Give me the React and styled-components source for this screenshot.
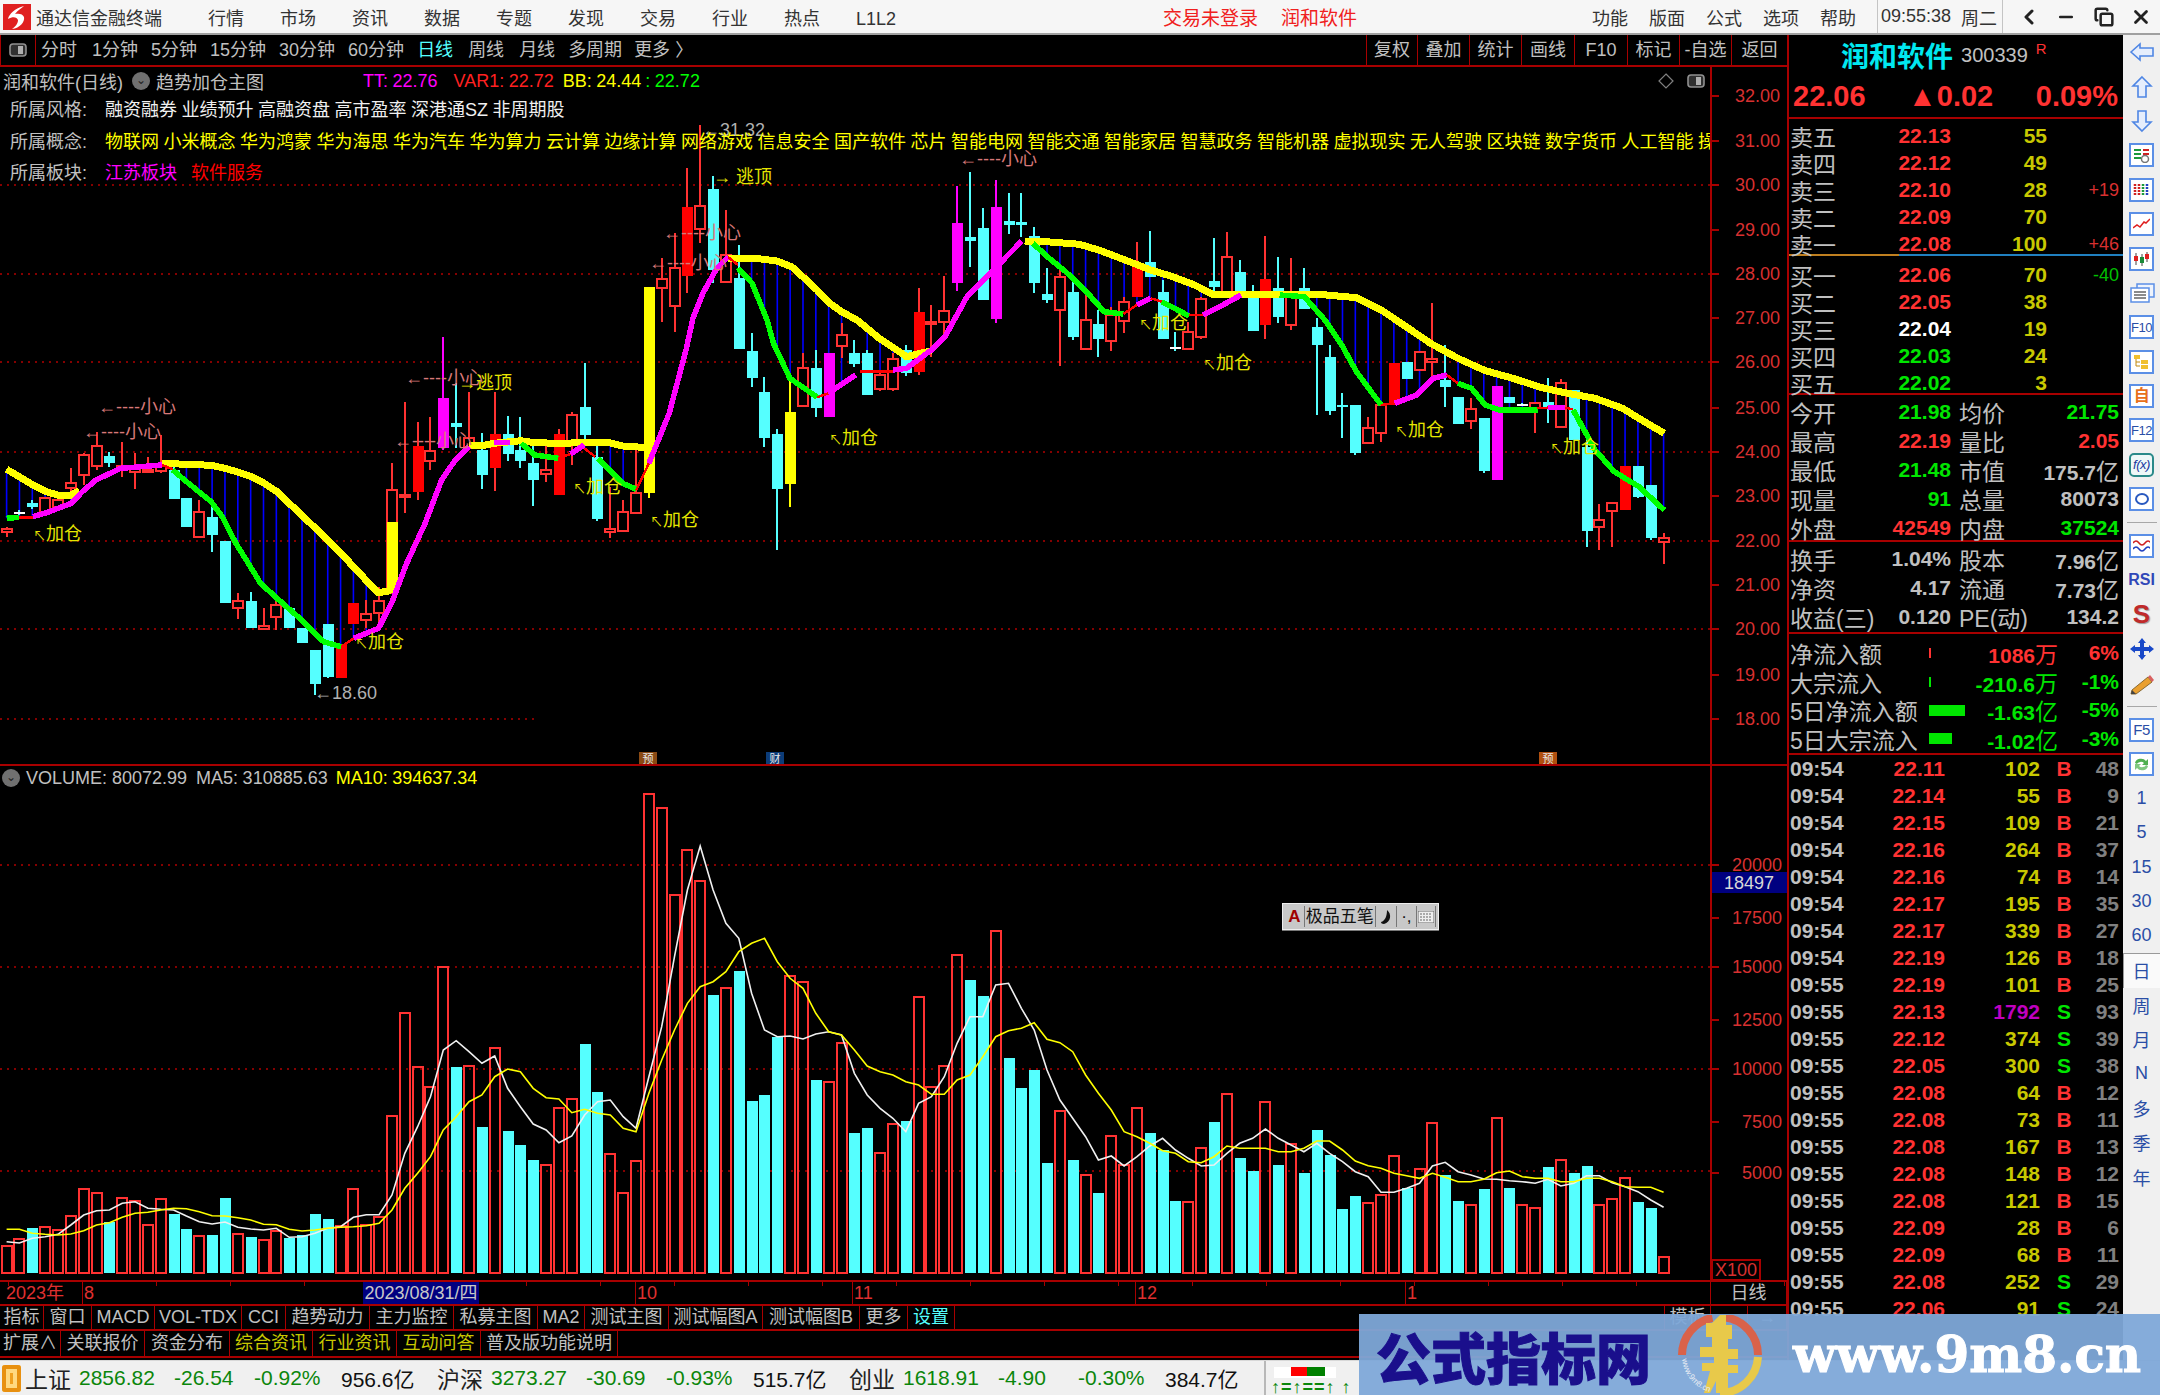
import React from "react";
import styled, { createGlobalStyle } from "styled-components";
import { ChevronLeft, Minus, Copy, X } from "lucide-react";

const RED = "#ff3232";
const GREEN = "#00e600";
const YEL = "#c8c800";
const GREY = "#c0c0c0";
const LINE = "#a80000";
const CYAN = "#55ffff";

const GlobalStyle = createGlobalStyle`
  html, body {
    margin: 0;
    background: #000;
    overflow: hidden;
  }
  body {
    font-family: "Liberation Sans", "Noto Sans CJK SC", sans-serif;
    color: ${GREY};
  }
`;

const Page = styled.div`
  position: relative;
  width: 2160px;
  height: 1395px;
  display: flex;
  flex-direction: column;
  overflow: hidden;
`;

/* ---------- title bar ---------- */

const TitleBar = styled.div`
  height: 33px;
  border-bottom: 2px solid #a0a0a0;
  background: #f6f6f6;
  color: #333;
  font-size: 18px;
  display: flex;
  align-items: center;
`;
const AppName = styled.span`
  width: 126px;
  margin: 0 46px 0 5px;
  white-space: nowrap;
`;
const MenuGroup = styled.div`
  display: flex;
  align-items: baseline;
  gap: ${p => p.$gap}px;
  margin-left: ${p => p.$left || "0"};
  color: ${p => p.$color || "inherit"};
  font-size: ${p => p.$size || 18}px;
`;
const Clock = styled.div`
  display: flex;
  gap: 10px;
  height: 33px;
  align-items: center;
  margin-left: 21px;
  padding: 0 5px 0 3px;
  border-left: 1px solid #c4c4c4;
  border-right: 1px solid #c4c4c4;
`;
const WindowBtn = styled.span`
  width: 37.5px;
  display: flex;
  justify-content: center;
  color: #222;
`;

/* ---------- layout ---------- */

const Body = styled.div`
  height: 1325px;
  display: flex;
`;
const LeftColumn = styled.div`
  width: 1787px;
  display: flex;
  flex-direction: column;
`;

const ChartToolbar = styled.div`
  height: 30px;
  border-bottom: 2px solid ${LINE};
  display: flex;
  font-size: 18px;
`;
const ToolBox = styled.div`
  width: 36px;
  border-right: 1px solid ${LINE};
  border-left: 1px solid ${LINE};
  box-sizing: border-box;
  display: flex;
  align-items: center;
  justify-content: center;
`;
const ToolItem = styled.span`
  margin-left: ${p => p.$left}px;
  color: ${p => p.$color || GREY};
  line-height: 30px;
  white-space: nowrap;
`;
const ToolGroup = styled.div`
  margin-left: auto;
  display: flex;
`;
const ToolCell = styled.span`
  width: ${p => p.$w}px;
  box-sizing: border-box;
  border-left: 1px solid ${LINE};
  text-align: center;
  line-height: 30px;
  white-space: nowrap;
`;

const Pane = styled.div`
  position: relative;
  height: ${p => p.$h}px;
  flex: none;
  border-bottom: ${p => p.$open ? "0" : `2px solid ${LINE}`};
`;
const ChartSvg = styled.svg`
  display: block;
  text { font-family: "Liberation Sans", "Noto Sans CJK SC", sans-serif; }
`;
const PaneHead = styled.div`
  position: absolute;
  left: 0;
  top: 0;
  width: 1710px;
  overflow: hidden;
  font-size: 18px;
  pointer-events: none;
`;
const IndicatorRow = styled.div`
  height: ${p => p.$h || 28}px;
  padding-left: ${p => p.$pad ?? 3}px;
  display: flex;
  align-items: center;
  white-space: nowrap;
`;
const Swatch = styled.span`
  color: ${p => p.$color};
  margin-left: ${p => p.$left || 0}px;
  white-space: nowrap;
  word-spacing: -0.5px;
`;
const ChevronDot = styled.span`
  width: 18px;
  height: 18px;
  margin: 0 6px 0 ${p => p.$left ?? 9}px;
  border-radius: 50%;
  background: #707070;
  color: #222;
  font-size: 12px;
  line-height: 17px;
  text-align: center;
`;
const InfoRow = styled.div`
  height: 31.5px;
  line-height: 31px;
  padding-left: 10px;
  white-space: nowrap;
  display: flex;
`;
const InfoLabel = styled.span`
  width: 95px;
  flex: none;
`;
const CornerIcons = styled.div`
  position: absolute;
  right: 82px;
  top: 6px;
  display: flex;
  gap: 13px;
  align-items: center;
`;

const AxisRow = styled.div`
  position: relative;
  height: 22px;
  flex: none;
  border-top: 2px solid ${LINE};
  border-bottom: 2px solid ${LINE};
  display: flex;
  color: #e03030;
  font-size: 18px;
  line-height: 22px;
  background: repeating-linear-gradient(90deg, ${LINE} 0 1px, transparent 1px 74px) 8px 0 / 100% 4px no-repeat;
`;
const AxisCell = styled.span`
  width: ${p => p.$w}px;
  box-sizing: border-box;
  padding-left: ${p => p.$pad ?? 6}px;
  border-right: 1px solid ${LINE};
  white-space: nowrap;
  color: ${p => p.$color || "inherit"};
  text-align: ${p => p.$align || "left"};
`;
const CursorDate = styled.span`
  position: absolute;
  left: 363px;
  top: 0;
  width: 116px;
  height: 22px;
  background: #000080;
  color: #c8c8c8;
  text-align: center;
  white-space: nowrap;
`;

const TabRow = styled.div`
  height: ${p => p.$h}px;
  flex: none;
  border-bottom: 2px solid ${LINE};
  display: flex;
  font-size: 18px;
  line-height: ${p => p.$h}px;
`;
const Tab = styled.span`
  width: ${p => p.$w}px;
  box-sizing: border-box;
  text-align: center;
  border-right: 1px solid ${LINE};
  white-space: nowrap;
  color: ${p => p.$color || GREY};
`;
const TabSpacer = styled.span`
  flex: 1;
  border-right: 1px solid ${LINE};
`;

/* ---------- quote panel ---------- */

const QuotePanel = styled.div`
  width: 336px;
  box-sizing: border-box;
  border-left: 2px solid ${LINE};
  font-size: 21px;
  font-weight: 700;
  overflow: hidden;
`;
const QuoteHead = styled.div`
  border-bottom: 2px solid ${LINE};
`;
const NameRow = styled.div`
  height: 40px;
  padding-left: 52px;
  display: flex;
  align-items: center;
  gap: 8px;
`;
const StockName = styled.span`
  color: #00e8f0;
  font-size: 28px;
`;
const StockCode = styled.span`
  color: ${GREY};
  font-size: 20px;
  font-weight: 400;
`;
const Rights = styled.sup`
  color: ${RED};
  font-size: 15px;
  font-weight: 400;
  margin-top: -14px;
`;
const PriceRow = styled.div`
  height: 42px;
  padding: 0 5px 0 4px;
  display: flex;
  align-items: center;
  justify-content: space-between;
  color: ${RED};
  font-size: 29px;
`;
const Section = styled.div`
  padding: ${p => p.$pad || "0"};
  border-bottom: ${p => p.$open ? "0" : `2px solid ${LINE}`};
`;
const SplitLine = styled.div`
  height: 2px;
  background: linear-gradient(90deg, #c08020 0 110px, #2080c0 110px);
`;
const Label = styled.span`
  color: ${GREY};
  font-size: 23px;
  font-weight: 400;
  white-space: nowrap;
`;
const Num = styled.span`
  color: ${p => p.$color || GREY};
  text-align: ${p => p.$align || "right"};
  white-space: nowrap;
`;
const Unit = styled.span`
  font-size: 23px;
  font-weight: 400;
`;
const BookRow = styled.div`
  height: 27px;
  padding-left: 1px;
  display: grid;
  grid-template-columns: 62px 99px 96px 72px;
  align-items: center;
`;
const Delta = styled(Num)`
  font-size: 18px;
  font-weight: 400;
`;
const StatRow = styled.div`
  height: 29px;
  padding-left: 1px;
  display: grid;
  grid-template-columns: 62px 99px 68px 100px;
  align-items: center;
`;
const StatLabel2 = styled(Label)`
  padding-left: 8px;
`;
const FlowRow = styled.div`
  height: 28.5px;
  padding-left: 1px;
  display: grid;
  grid-template-columns: 139px 40px 89px 61px;
  align-items: center;
`;
const FlowBar = styled.span`
  display: block;
  width: ${p => p.$w}px;
  height: ${p => p.$w > 4 ? 11 : 10}px;
  background: ${p => p.$color};
`;
const TickRow = styled.div`
  height: 27px;
  padding: 0 4px 0 1px;
  display: grid;
  grid-template-columns: 64px 91px 95px 48px 1fr;
  align-items: center;
`;
const Side = styled.span`
  color: ${p => p.$color};
  text-align: center;
`;

/* ---------- side toolbar ---------- */

const SideBar = styled.div`
  flex: 1;
  background: #f0f0f0;
  display: flex;
  flex-direction: column;
  align-items: center;
`;
const SideBtn = styled.div`
  width: 100%;
  height: 34.4px;
  flex: none;
  display: flex;
  align-items: center;
  justify-content: center;
  color: #2a4ea6;
  font-size: 18px;
  background: ${p => p.$on ? "#fafafa" : "transparent"};
  box-shadow: ${p => p.$on ? "inset 1px 1px 0 #9a9a9a" : "none"};
`;
const SideSep = styled.div`
  width: 30px;
  height: 12px;
  flex: none;
  background: linear-gradient(#a8a8a8, #a8a8a8) center / 100% 1px no-repeat;
`;
const IconFrame = styled.div`
  width: 21px;
  height: 20px;
  border: 2px solid #5b8fe6;
  background: #fff;
  display: flex;
  align-items: center;
  justify-content: center;
  color: #2a4ea6;
  font-size: 13px;
  letter-spacing: -0.5px;
  line-height: 1;
  white-space: nowrap;
`;

/* ---------- bottom status ---------- */

const StatusBar = styled.div`
  height: 34px;
  flex: none;
  border-top: 1px solid #d8d8d8;
  background: #f0f0f0;
  display: flex;
  align-items: center;
  padding-left: 2px;
`;
const Coin = styled.span`
  width: 19px;
  height: 27px;
  margin-right: 4px;
  border-radius: 3px;
  background: #f0a020;
  box-shadow: inset 0 0 0 4px #e89010, inset 0 0 0 8px #ffd880;
`;
const IndexBlock = styled.div`
  display: grid;
  grid-template-columns: 54px 95px 80px 87px 96px;
  align-items: center;
  font-size: 21px;
  color: #0b860b;
  white-space: nowrap;
`;
const IndexName = styled.span`
  font-size: 23px;
  color: #222;
`;
const IndexAmt = styled.span`
  color: #111;
`;
const MiniSep = styled.div`
  width: 100px;
  margin-left: 3px;
  height: 34px;
  border-left: 2px solid #b8b8b8;
`;

/* ---------- floating bits ---------- */

const ImeBar = styled.div`
  position: absolute;
  left: 1282px;
  top: 903px;
  height: 21px;
  width: 151px;
  padding: 2px;
  background: #c8c8c8;
  border: 1px solid #eee;
  box-shadow: 0 1px 0 #777;
  display: flex;
  color: #111;
  font-size: 17px;
  line-height: 21px;
`;
const ImeKey = styled.span`
  width: ${p => p.$w}px;
  display: flex;
  align-items: center;
  justify-content: center;
  white-space: nowrap;
  border-right: 1px solid #777;
  color: ${p => p.$color || "#111"};
  font-weight: ${p => p.$color ? 700 : 400};
`;

const Watermark = styled.div`
  position: absolute;
  left: 1359px;
  top: 1314px;
  right: 0;
  bottom: 0;
  background: rgba(126, 168, 216, 0.95);
  display: flex;
  align-items: center;
`;
const WmTitle = styled.span`
  margin-left: 17px;
  width: 275px;
  color: #1a0f8c;
  font-size: 55px;
  font-weight: 900;
  white-space: nowrap;
  -webkit-text-stroke: 1px #1a0f8c;
`;
const WmLogo = styled.svg`
  margin-left: 27px;
  flex: none;
`;
const WmUrl = styled.span`
  margin-left: 31px;
  color: #fff;
  font-family: "DejaVu Serif", serif;
  font-size: 50px;
  font-weight: 700;
  white-space: nowrap;
  -webkit-text-stroke: 1px #fff;
`;

/* ---------- chart data, y read off the 3x crops ---------- */

const barX = i => 6.6 + 12.845 * i;
const fromLeft = ([x, y]) => [x / 1.823, 300 + y / 3];
const fromRight = ([x, y]) => [860 + x / 1.823, 140 + y / 3];

// kind, high, top, bottom, low; base y 300
const LEFT_CANDLES = [
  ["r",680,686,696,710],["w",630,635,638,645],["c",600,608,622,628],["r",590,595,635,640],["r",585,600,622,630],
  ["r",505,550,564,572],["r",460,465,525,555],["r",395,438,498,510],["c",455,468,490,500],["r",425,497,508,530],
  ["r",458,500,515,568],["r",470,510,516,520],["r",405,495,512,520],["c",490,510,598,598],["c",595,595,680,680],
  ["r",600,636,710,715],["c",600,650,705,755],["c",722,722,910,910],["r",880,903,925,958],["c",875,902,985,985],
  ["r",925,978,988,988],["r",895,915,952,990],["c",925,925,985,985],["c",983,983,1030,1030],["c",1050,1050,1152,1185],
  ["c",973,973,1130,1135],["R",1035,1035,1135,1135],["R",910,910,972,972],["r",900,943,960,985],["r",860,902,938,965],
  ["ry",488,570,880,880,665],["r",305,586,590,640],["R",365,438,575,600],["r",350,452,484,510],["m",110,293,445,450],
  ["c",250,370,382,445],["r",275,415,440,450],["c",400,450,525,568],["R",275,402,503,572],["c",348,402,463,482],
  ["c",352,450,482,505],["c",430,488,540,617],["r",430,510,522,545],["R",388,402,585,585],["r",335,345,430,495],
  ["c",188,320,405,420],["c",430,470,658,662],["r",560,686,696,715],["r",600,637,692,692],["r",440,578,638,638],
  ["y",-39,-39,580,595],["r",-126,-63,-36,65],["r",-201,-96,18,95],["R",-396,-279,-72,-21],["r",-525,-282,-213,-171],
  ["c",-372,-333,-90,-51],["r",-270,-135,-54,-54],["c",-165,-66,148,148],["c",100,153,235,262],["c",230,276,415,440],
  ["c",388,402,567,750],["y",230,335,553,620],["r",160,205,318,318],["c",150,205,323,350],["m",158,158,350,350],
  ["r",70,105,138,175],["c",120,158,192,200],
];
// same, base y 140
const RIGHT_CANDLES = [
  ["c",630,638,765,765],["r",690,706,748,752],["r",640,658,748,752],["c",615,630,700,708],["R",445,517,695,705],
  ["r",495,545,550,650],["r",408,513,545,600],["m",138,250,430,452],["c",95,292,303,380],["c",203,265,480,480],
  ["m",120,202,537,550],["c",160,242,254,282],["c",160,247,254,290],["c",260,287,430,458],["c",385,463,480,490],
  ["r",375,410,510,678],["c",415,455,592,600],["r",445,540,627,630],["c",510,553,596,650],["r",500,525,604,632],
  ["r",470,487,542,578],["R",305,380,470,470],["c",273,365,412,412],["c",420,455,597,597],["w",575,620,623,632],
  ["r",545,577,627,627],["r",470,477,590,597],["c",295,423,440,470],["r",275,352,455,455],["c",360,395,460,460],
  ["c",436,475,574,574],["R",287,418,555,597],["c",350,445,530,548],["r",355,465,555,570],["c",385,445,507,507],
  ["c",535,562,615,825],["c",615,652,812,825],["c",760,795,800,893],["c",796,796,940,945],["r",832,865,910,910],
  ["r",795,795,878,907],["R",670,670,795,795],["c",665,665,718,718],["r",635,635,690,690],["r",490,657,667,720],
  ["c",615,720,740,800],["c",770,770,853,853],["r",773,806,842,867],["c",833,833,994,998],["m",738,738,1020,1020],
  ["c",770,770,790,790],["w",790,792,795,798],["r",788,788,805,880],["c",715,786,802,850],["r",718,730,862,862],
  ["c",750,750,900,900],["c",900,920,1172,1222],["r",1092,1140,1162,1230],["r",1090,1090,1113,1222],["R",977,977,1110,1110],
  ["c",977,977,1070,1075],["c",1035,1035,1195,1200],["r",1180,1193,1207,1272],
];

const toPage = (list, base) => list.map(c => {
  const [kind, ...rest] = c;
  return [kind, ...rest.map(v => base + v / 3)];
});
const CANDLES = [...toPage(LEFT_CANDLES, 300), ...toPage(RIGHT_CANDLES, 140)];

const left = pts => pts.map(fromLeft);
const right = pts => pts.map(fromRight);

const YELLOW_SEGS = [
  left([[12,508],[35,530],[60,555],[85,575],[105,585],[129,585],[145,572]]),
  left([[295,490],[340,493],[385,496],[410,505],[435,517],[458,530],[480,548],[505,575],[527,610],[550,645],[572,680],[597,720],[622,760],[644,800],[667,840],[690,878],[712,872]]),
  left([[855,437],[880,437],[900,430],[950,422],[975,428],[1018,430],[1065,428],[1110,428],[1135,438],[1183,443]]),
  [[728,258],[753,258],[777,261],[792,267],[803,277],[817,290],[828,302],[842,312],[857,320],...right([[35,595],[85,650],[130,632]])],
  right([[300,303],[340,305],[400,313],[435,330],[480,358],[530,390],[570,410],[610,435],[645,465],[700,462],[830,462],[905,473],[950,510],[1000,565],[1040,610],[1090,655],[1140,692],[1190,715],[1240,742],[1290,760],[1340,775],[1390,805],[1430,845],[1466,880]]),
];

const LOWER_SEGS = [
  ["g", left([[12,655],[35,652]])],
  ["r", left([[35,652],[60,652]])],
  ["m", left([[60,650],[85,638],[130,610],[150,575],[175,540],[220,505],[295,495]])],
  ["r", left([[295,495],[315,508]])],
  ["g", left([[315,510],[340,545],[385,605],[405,650],[430,730],[475,850],[505,895],[550,960],[590,1025],[622,1040]])],
  ["r", left([[622,1040],[645,1015]])],
  ["m", left([[645,1015],[690,985],[715,905],[740,795],[775,670],[805,540],[830,480],[855,440]])],
  ["m", left([[900,428],[930,428]])],
  ["g", left([[950,430],[975,465],[1018,475]])],
  ["r", left([[1018,475],[1040,462]])],
  ["m", left([[1040,462],[1065,435]])],
  ["r", left([[1065,445],[1085,470]])],
  ["g", left([[1090,475],[1135,550],[1160,568]])],
  ["r", left([[1160,570],[1183,490]])],
  ["m", [...left([[1183,490],[1220,340]]),[686,350],[693,318],[703,293],[717,268],[728,257]]],
  ["r", [[728,257],[738,265]]],
  ["g", [[738,268],[752,283],[767,320],...left([[1410,130],[1440,235],[1490,292]])]],
  ["r", left([[1490,292],[1510,280]])],
  ["m", left([[1510,280],[1560,225]])],
  ["r", right([[0,695],[60,695]])],
  ["m", right([[60,690],[85,685],[130,630],[155,590],[195,470],[240,395],[295,303]])],
  ["g", right([[315,310],[345,355],[375,395],[410,450],[445,515],[480,522]])],
  ["r", right([[480,522],[505,495]])],
  ["m", right([[505,495],[530,475]])],
  ["r", right([[530,475],[550,485]])],
  ["g", right([[550,485],[600,528]])],
  ["r", right([[600,525],[625,525]])],
  ["m", right([[625,525],[650,505],[695,465]])],
  ["g", right([[765,465],[810,470],[850,545],[880,620],[905,695],[950,795]])],
  ["r", right([[950,795],[975,790]])],
  ["m", right([[975,790],[1015,765],[1045,715],[1070,705]])],
  ["r", right([[1070,705],[1090,730]])],
  ["g", right([[1090,730],[1115,745],[1140,795],[1165,810],[1235,810]])],
  ["r", right([[1235,805],[1255,803]])],
  ["m", right([[1255,803],[1285,803]])],
  ["r", right([[1285,803],[1300,808]])],
  ["g", right([[1300,810],[1340,930],[1375,995],[1420,1040],[1466,1110]])],
];

const BLUE_RANGES = [[0,5],[13,29],[39,49],[57,65],[67,70],[81,93],[102,129]];

const interp = (pts, x) => {
  for (let k = 1; k < pts.length; k++) {
    const [x0, y0] = pts[k - 1];
    const [x1, y1] = pts[k];
    if (x >= x0 && x <= x1 && x1 > x0) return y0 + (y1 - y0) * (x - x0) / (x1 - x0);
  }
  return null;
};
const yellowAll = YELLOW_SEGS.flat();
const lowerAll = LOWER_SEGS.flatMap(s => s[1]);
const BLUE_LINES = BLUE_RANGES.flatMap(([a, b]) => {
  const out = [];
  for (let i = a; i <= b; i++) {
    const x = barX(i);
    const y0 = interp(yellowAll, x);
    const y1 = interp(lowerAll, x);
    if (y0 != null && y1 != null) out.push([x, y0, y1]);
  }
  return out;
});

const LABELS = [
  { x: 98, y: 407, t: "←----小心", c: "warn" },
  { x: 83, y: 432, t: "←----小心", c: "warn" },
  { x: 394, y: 441, t: "←----小心", c: "warn" },
  { x: 405, y: 378, t: "←----小心", c: "warn" },
  { x: 663, y: 233, t: "←----小心", c: "warn" },
  { x: 649, y: 263, t: "←----小心", c: "warn" },
  { x: 959, y: 159, t: "←----小心", c: "warn" },
  { x: 458, y: 383, t: "→逃顶", c: "add" },
  { x: 713, y: 177, t: "→ 逃顶", c: "add" },
  { x: 33, y: 534, t: "↖加仓", c: "add" },
  { x: 355, y: 642, t: "↖加仓", c: "add" },
  { x: 573, y: 487, t: "↖加仓", c: "add" },
  { x: 650, y: 520, t: "↖加仓", c: "add" },
  { x: 829, y: 438, t: "↖加仓", c: "add" },
  { x: 1139, y: 323, t: "↖加仓", c: "add" },
  { x: 1203, y: 363, t: "↖加仓", c: "add" },
  { x: 1395, y: 430, t: "↖加仓", c: "add" },
  { x: 1550, y: 447, t: "↖加仓", c: "add" },
  { x: 314, y: 693, t: "←18.60", c: "plain" },
  { x: 702, y: 130, t: "←31.32", c: "plain" },
];
const LABEL_COLOR = { warn: "#d87878", add: "#e6e600", plain: "#b0b0b0" };

const PRICE_TICKS = [[32,96],[31,141],[30,185],[29,230],[28,274],[27,318],[26,362],[25,408],[24,452],[23,496],[22,541],[21,585],[20,629],[19,675],[18,719]];
const PRICE_GRID = [[185,1711],[274,1711],[362,1711],[452,1711],[541,1711],[629,1711],[719,537]];
const EVENT_MARKS = [[639,"#8a4a14","预"],[766,"#0c3c78","财"],[1539,"#b05010","预"]];

// cyan bars are stored negative, y base 760
const VOLUMES = [
  1458,1436,-1403,1400,1409,1368,1287,1300,-1386,1314,1322,1395,1318,-1362,-1408,1427,-1425,-1313,1422,-1430,
  1440,1413,-1433,-1425,-1362,-1376,1398,1287,1395,1372,1067,760,922,980,620,-920,917,-1100,863,-1114,
  -1155,-1200,1214,1043,1016,-853,-997,1183,1300,1202,102,143,404,269,364,-704,683,-632,-1024,-1006,
  -830,647,665,-961,967,850,-1119,-1105,1178,1093,-1083,710,980,917,584,-659,-709,513,-894,-983,
  -930,-1209,1052,-1200,1246,-1299,1129,1215,1043,-1119,-1170,-1322,1327,1165,-1087,1003,-1195,-1232,1025,-1214,
  1152,-1240,-1109,-1186,-1348,-1307,1328,1305,1187,-1283,1228,1088,-1244,-1322,1336,-1286,1075,-1285,1336,1345,
  -1222,1201,-1240,-1217,1336,1318,1255,-1326,-1344,1490,
];
const MA5 = [
  1445,1449,1435,1430,1423,1395,1365,1352,1350,1330,1325,1345,1348,1350,1368,1385,1392,1386,1402,1407,
  1410,1405,1432,1430,1420,1405,1400,1372,1364,1364,1305,1180,1100,1010,870,842,875,910,888,985,
  1040,1092,1110,1148,1128,1065,1025,1020,1070,1105,950,800,590,390,258,390,490,535,700,810,
  830,828,837,822,815,825,940,1005,1045,1075,1115,1030,1010,950,850,770,770,675,670,745,
  810,930,1020,1075,1130,1200,1188,1218,1190,1158,1135,1170,1195,1218,1215,1180,1150,1135,1107,1135,
  1155,1175,1150,1180,1205,1235,1250,1297,1297,1285,1270,1218,1207,1235,1245,1257,1258,1262,1265,1270,
  1258,1278,1270,1247,1247,1268,1280,1295,1320,1342,
];
const MA10 = [
  1408,1408,1420,1423,1425,1422,1412,1395,1388,1372,1360,1357,1350,1345,1346,1355,1367,1368,1373,1380,
  1393,1394,1408,1413,1410,1405,1402,1400,1397,1390,1350,1285,1240,1190,1110,1070,1025,1005,950,927,
  935,985,1013,1017,1058,1048,1060,1065,1105,1115,1000,900,810,730,680,665,635,575,550,535,
  605,655,685,760,815,825,870,918,935,945,965,975,1003,1003,960,945,890,830,812,805,
  788,838,848,875,945,1000,1050,1115,1130,1150,1172,1180,1205,1208,1190,1158,1165,1165,1165,1175,
  1175,1165,1143,1143,1170,1203,1217,1225,1240,1247,1255,1240,1252,1265,1265,1258,1238,1233,1250,1255,
  1255,1265,1265,1255,1255,1265,1280,1282,1282,1297,
];
const VOL_TICKS = [["20000",865],["17500",918],["15000",967],["12500",1020],["10000",1069],["7500",1122],["5000",1173]];
const VOL_GRID = [865, 967, 1069, 1171];

const volY = z => 760 + z / 3;
const polyPoints = pts => pts.map(p => p.map(v => v.toFixed(1)).join(",")).join(" ");
const maPoints = list => list.map((z, i) => `${barX(i).toFixed(1)},${volY(z).toFixed(1)}`).join(" ");

/* ---------- chart parts ---------- */

const LOWER_COLOR = { g: "#00ff00", m: "#ff00ff", r: "#ff0000" };

const Candle = ({ i, data }) => {
  const [kind, high, top, bottom, low, split] = data;
  const cx = Math.round(barX(i));
  const hollow = kind === "r" || kind === "ry";
  const fill = { c: CYAN, R: "#ff0000", y: "#ffff00", m: "#ff00ff", w: "#ffffff" }[kind];
  const wick = hollow || kind === "R" ? RED : kind === "c" || kind === "w" ? CYAN : fill;
  return (
    <g shapeRendering="crispEdges">
      <rect x={cx - 1} y={high} width={2} height={Math.max(low - high, 1)} fill={wick} />
      {hollow ? (
        <rect x={cx - 5} y={top} width={10} height={Math.max(bottom - top, 2)} fill="#000" stroke={RED} strokeWidth={2} />
      ) : (
        <rect x={cx - 5.5} y={top} width={11} height={Math.max(bottom - top, 2)} fill={fill} />
      )}
      {kind === "ry" && <rect x={cx - 5.5} y={split} width={11} height={bottom - split} fill="#ffff00" />}
    </g>
  );
};

// small arrow in front of 加仓, the reference draws it narrower than a CJK cell
const ChartLabel = ({ l }) => {
  const small = l.t[0] === "↖";
  return (
    <text x={l.x} y={l.y + 6} fontSize={18} fill={LABEL_COLOR[l.c]}>
      {small ? <><tspan fontSize={13}>↖</tspan>{l.t.slice(1)}</> : l.t}
    </text>
  );
};

const PriceChart = () => (
  <ChartSvg width={1787} height={697} viewBox="0 67 1787 697">
    {PRICE_GRID.map(([y, end]) => (
      <line key={y} x1={0} x2={end} y1={y} y2={y} stroke="#b00000" strokeWidth={1.5} strokeDasharray="2 5" />
    ))}
    {EVENT_MARKS.map(([x, bg, t]) => (
      <g key={x}>
        <rect x={x} y={752} width={18} height={12} fill={bg} />
        <text x={x + 9} y={763} fontSize={11} fill="#e8e8e8" textAnchor="middle">{t}</text>
      </g>
    ))}
    {BLUE_LINES.map(([x, y0, y1]) => (
      <line key={x} x1={x} x2={x} y1={y0} y2={y1} stroke="#0000ff" strokeWidth={1.6} />
    ))}
    {CANDLES.map((c, i) => <Candle key={i} i={i} data={c} />)}
    {YELLOW_SEGS.map((pts, k) => (
      <polyline key={k} points={polyPoints(pts)} fill="none" stroke="#ffff00" strokeWidth={7} shapeRendering="crispEdges" />
    ))}
    {LOWER_SEGS.map(([c, pts], k) => (
      <polyline key={k} points={polyPoints(pts)} fill="none" stroke={LOWER_COLOR[c]} strokeWidth={c === "r" ? 2.5 : 5.5} shapeRendering="crispEdges" />
    ))}
    {LABELS.map(l => <ChartLabel key={`${l.x}-${l.y}`} l={l} />)}
    <line x1={1711} x2={1711} y1={67} y2={764} stroke={LINE} strokeWidth={2} />
    {PRICE_TICKS.map(([v, y]) => (
      <g key={v}>
        <line x1={1711} x2={1719} y1={y} y2={y} stroke={LINE} strokeWidth={2} />
        <text x={1780} y={y + 6} fontSize={18} fill="#d83030" textAnchor="end">{v.toFixed(2)}</text>
      </g>
    ))}
  </ChartSvg>
);

const VolumeChart = () => (
  <ChartSvg width={1787} height={514} viewBox="0 766 1787 514">
    {VOL_GRID.map(y => (
      <line key={y} x1={0} x2={1711} y1={y} y2={y} stroke="#b00000" strokeWidth={1.5} strokeDasharray="2 5" />
    ))}
    <g shapeRendering="crispEdges">
      {VOLUMES.map((v, i) => {
        const cx = Math.round(barX(i));
        const top = volY(Math.abs(v));
        return v < 0 ? (
          <rect key={i} x={cx - 5.5} y={top} width={11} height={1273 - top} fill={CYAN} />
        ) : (
          <rect key={i} x={cx - 5} y={top} width={10} height={1273 - top} fill="none" stroke={RED} strokeWidth={2} />
        );
      })}
    </g>
    <polyline points={maPoints(MA5)} fill="none" stroke="#f0f0f0" strokeWidth={1.6} />
    <polyline points={maPoints(MA10)} fill="none" stroke="#ffff00" strokeWidth={1.6} />
    <line x1={1711} x2={1711} y1={766} y2={1280} stroke={LINE} strokeWidth={2} />
    {VOL_TICKS.map(([t, y]) => (
      <g key={t}>
        <line x1={1711} x2={1719} y1={y} y2={y} stroke={LINE} strokeWidth={2} />
        <text x={1782} y={y + 6} fontSize={18} fill="#d83030" textAnchor="end">{t}</text>
      </g>
    ))}
    <rect x={1712} y={872} width={75} height={21} fill="#000080" />
    <text x={1749} y={889} fontSize={18} fill="#d8d8d8" textAnchor="middle">18497</text>
    <rect x={1712} y={1260} width={48} height={20} fill="none" stroke={LINE} strokeWidth={2} />
    <text x={1736} y={1276} fontSize={18} fill="#d83030" textAnchor="middle">X100</text>
  </ChartSvg>
);

/* ---------- icons ---------- */

const Glyph = ({ children, w = 26, h = 24 }) => (
  <svg width={w} height={h} viewBox="0 0 26 24">{children}</svg>
);
const ArrowPath = ({ d }) => <path d={d} fill="#e6eefc" stroke="#4f86e4" strokeWidth={1.6} />;

const SIDE_ICONS = {
  left: <Glyph><ArrowPath d="M2 12 L11 4 V8 H24 V16 H11 V20 Z" /></Glyph>,
  up: <Glyph><ArrowPath d="M13 2 L22 11 H17 V22 H9 V11 H4 Z" /></Glyph>,
  down: <Glyph><ArrowPath d="M13 22 L22 13 H17 V2 H9 V13 H4 Z" /></Glyph>,
  quote: <IconFrame><svg width="17" height="16"><path d="M1 3h7M1 7h7M1 11h7" stroke="#1a9a3a" strokeWidth="2" /><path d="M10 3h6M10 7h6" stroke="#d02020" strokeWidth="2" /><circle cx="12" cy="12" r="3.5" fill="none" stroke="#777" strokeWidth="1.5" /></svg></IconFrame>,
  grid: <IconFrame><svg width="17" height="16"><path d="M2 2v12M6 2v12" stroke="#d02020" strokeWidth="2.5" strokeDasharray="2 1" /><path d="M10 2v12" stroke="#1a9a3a" strokeWidth="2.5" strokeDasharray="2 1" /><path d="M14 2v12" stroke="#2040c0" strokeWidth="2.5" strokeDasharray="2 1" /></svg></IconFrame>,
  line: <IconFrame><svg width="17" height="16"><path d="M0 12 L4 9 L7 11 L11 6 L13 7 L17 3" fill="none" stroke="#e02020" strokeWidth="1.5" /></svg></IconFrame>,
  candle: <IconFrame><svg width="17" height="16"><path d="M3 2v12M9 3v12M14 1v10" stroke="#444" /><rect x="1" y="5" width="4" height="5" fill="#e02020" /><rect x="7" y="6" width="4" height="6" fill="#1a8a3a" /><rect x="12" y="3" width="4" height="5" fill="#e02020" /></svg></IconFrame>,
  windows: <Glyph><rect x="8" y="3" width="17" height="13" fill="#eef3fc" stroke="#5b8fe6" strokeWidth="1.5" /><rect x="2" y="7" width="18" height="14" fill="#fff" stroke="#5b8fe6" strokeWidth="1.5" /><path d="M5 11h12M5 14h12M5 17h12" stroke="#666" strokeWidth="1.5" /></Glyph>,
  f10: <IconFrame>F10</IconFrame>,
  tree: <IconFrame><svg width="17" height="16"><path d="M3 4v8h4M3 8h4" fill="none" stroke="#c08a10" /><rect x="1" y="1" width="6" height="4" fill="#f0c030" /><rect x="8" y="6" width="7" height="4" fill="#f0c030" /><rect x="8" y="11" width="7" height="4" fill="#f0c030" /></svg></IconFrame>,
  self: <IconFrame style={{ color: "#e8701a", fontWeight: 700, fontSize: 16 }}>自</IconFrame>,
  f12: <IconFrame>F12</IconFrame>,
  fx: <IconFrame style={{ borderColor: "#2a8a8a", borderRadius: 5, fontStyle: "italic", color: "#1a3aa0", background: "#eef8f8" }}>f(x)</IconFrame>,
  ring: <IconFrame><svg width="16" height="14"><ellipse cx="8" cy="7" rx="6" ry="5" fill="none" stroke="#2a5ac0" strokeWidth="2" /></svg></IconFrame>,
  wave: <IconFrame><svg width="17" height="16"><path d="M0 5 Q3 1 6 5 T12 5 T18 5" fill="none" stroke="#d02020" strokeWidth="1.5" /><path d="M0 11 Q3 7 6 11 T12 11 T18 11" fill="none" stroke="#2040c0" strokeWidth="1.5" /></svg></IconFrame>,
  rsi: <span style={{ fontWeight: 900, fontSize: 16, color: "#3048b8" }}>RSI</span>,
  dollar: <span style={{ fontWeight: 900, fontSize: 26, color: "#c02a2a", textShadow: "1px 1px 1px #999" }}>S</span>,
  move: <Glyph><path d="M13 1 L17 6 H15 V10 H20 V8 L25 12 L20 16 V14 H15 V18 H17 L13 23 L9 18 H11 V14 H6 V16 L1 12 L6 8 V10 H11 V6 H9 Z" fill="#1848c8" /></Glyph>,
  pencil: <Glyph><path d="M3 19 L19 6 L23 11 L7 23 L2 23 Z" fill="#eaa030" stroke="#8a6a30" /><path d="M19 6 L21 4 L25 9 L23 11 Z" fill="#d86060" /><path d="M2 23 L3 19 L7 23 Z" fill="#444" /></Glyph>,
  f5: <IconFrame style={{ fontSize: 15 }}>F5</IconFrame>,
  refresh: <IconFrame><svg width="17" height="16"><path d="M2 7 A6 5 0 0 1 13 5 L15 3 V9 H9 L11 7 A4 3 0 0 0 4 8 Z" fill="#50b050" /><path d="M15 10 A6 5 0 0 1 4 12 L2 14 V8 H8 L6 10 A4 3 0 0 0 13 9 Z" fill="#80c880" /></svg></IconFrame>,
};

const SIDE_ITEMS = [
  "left", "up", "down", "quote", "grid", "line", "candle", "windows", "f10", "tree", "self", "f12", "fx", "ring",
  "-", "wave", "rsi", "dollar", "move", "pencil",
  "-", "f5", "refresh",
];
const SIDE_PERIODS = ["1", "5", "15", "30", "60", "日", "周", "月", "N", "多", "季", "年"];

const ToolIcon = () => (
  <svg width="18" height="14" viewBox="0 0 18 14">
    <rect x="1" y="1" width="16" height="12" rx="3" fill="#303030" stroke="#909090" strokeWidth="1.6" />
    <rect x="9" y="3" width="5" height="8" fill="#b0b0b0" />
  </svg>
);

const AppLogo = () => (
  <svg width="28" height="26" viewBox="0 0 28 26" style={{ marginLeft: 3 }}>
    <rect width="28" height="26" fill="#e02020" />
    <path d="M21 2 C12 4 6 10 5 15 C10 12 14 13 15 16 C15 20 12 23 9 25 C17 24 22 18 21 13 C20 10 16 9 12 10 C15 6 19 4 21 2 Z" fill="#fff" />
  </svg>
);

/* ---------- panel data ---------- */

const SELLS = [
  ["卖五", "22.13", "55", ""],
  ["卖四", "22.12", "49", ""],
  ["卖三", "22.10", "28", "+19"],
  ["卖二", "22.09", "70", ""],
  ["卖一", "22.08", "100", "+46"],
];
const BUYS = [
  ["买一", "22.06", RED, "70", "-40"],
  ["买二", "22.05", RED, "38", ""],
  ["买三", "22.04", "#ffffff", "19", ""],
  ["买四", "22.03", GREEN, "24", ""],
  ["买五", "22.02", GREEN, "3", ""],
];
const STATS_A = [
  ["今开", "21.98", GREEN, "均价", "21.75", GREEN],
  ["最高", "22.19", RED, "量比", "2.05", RED],
  ["最低", "21.48", GREEN, "市值", "175.7亿", GREY],
  ["现量", "91", GREEN, "总量", "80073", GREY],
  ["外盘", "42549", RED, "内盘", "37524", GREEN],
];
const STATS_B = [
  ["换手", "1.04%", GREY, "股本", "7.96亿", GREY],
  ["净资", "4.17", GREY, "流通", "7.73亿", GREY],
  ["收益(三)", "0.120", GREY, "PE(动)", "134.2", GREY],
];
const FLOWS = [
  ["净流入额", 2, RED, "1086万", "6%"],
  ["大宗流入", 2, GREEN, "-210.6万", "-1%"],
  ["5日净流入额", 36, GREEN, "-1.63亿", "-5%"],
  ["5日大宗流入", 23, GREEN, "-1.02亿", "-3%"],
];
const TICKS = [
  ["09:54","22.11","102","B","48"],["09:54","22.14","55","B","9"],["09:54","22.15","109","B","21"],
  ["09:54","22.16","264","B","37"],["09:54","22.16","74","B","14"],["09:54","22.17","195","B","35"],
  ["09:54","22.17","339","B","27"],["09:54","22.19","126","B","18"],["09:55","22.19","101","B","25"],
  ["09:55","22.13","1792","S","93"],["09:55","22.12","374","S","39"],["09:55","22.05","300","S","38"],
  ["09:55","22.08","64","B","12"],["09:55","22.08","73","B","11"],["09:55","22.08","167","B","13"],
  ["09:55","22.08","148","B","12"],["09:55","22.08","121","B","15"],["09:55","22.09","28","B","6"],
  ["09:55","22.09","68","B","11"],["09:55","22.08","252","S","29"],["09:55","22.06","91","S","24"],
];

const withUnit = s => {
  const last = s[s.length - 1];
  if (last === "亿" || last === "万") return <>{s.slice(0, -1)}<Unit>{last}</Unit></>;
  return s;
};

const StatSection = ({ rows, pad }) => (
  <Section $pad={pad}>
    {rows.map(r => (
      <StatRow key={r[0]}>
        <Label>{r[0]}</Label>
        <Num $color={r[2]}>{r[1]}</Num>
        <StatLabel2>{r[3]}</StatLabel2>
        <Num $color={r[5]}>{withUnit(r[4])}</Num>
      </StatRow>
    ))}
  </Section>
);

const QuoteColumn = () => (
  <QuotePanel>
    <QuoteHead>
      <NameRow>
        <StockName>润和软件</StockName>
        <StockCode>300339</StockCode>
        <Rights>R</Rights>
      </NameRow>
      <PriceRow>
        <span>22.06</span>
        <span>▲0.02</span>
        <span>0.09%</span>
      </PriceRow>
    </QuoteHead>
    <Section $open>
      {SELLS.map(r => (
        <BookRow key={r[0]}>
          <Label>{r[0]}</Label>
          <Num $color={RED}>{r[1]}</Num>
          <Num $color={YEL}>{r[2]}</Num>
          <Delta $color="#d83030">{r[3]}</Delta>
        </BookRow>
      ))}
    </Section>
    <SplitLine />
    <Section $pad="2px 0 0">
      {BUYS.map(r => (
        <BookRow key={r[0]}>
          <Label>{r[0]}</Label>
          <Num $color={r[2]}>{r[1]}</Num>
          <Num $color={YEL}>{r[3]}</Num>
          <Delta $color="#00c000">{r[4]}</Delta>
        </BookRow>
      ))}
    </Section>
    <StatSection rows={STATS_A} />
    <StatSection rows={STATS_B} pad="0 0 3px" />
    <Section $pad="2px 0 3px">
      {FLOWS.map(r => (
        <FlowRow key={r[0]}>
          <Label>{r[0]}</Label>
          <FlowBar $w={r[1]} $color={r[2]} />
          <Num $color={r[2]}>{withUnit(r[3])}</Num>
          <Num $color={r[2]}>{r[4]}</Num>
        </FlowRow>
      ))}
    </Section>
    {TICKS.map((t, i) => (
      <TickRow key={i}>
        <Num $align="left">{t[0]}</Num>
        <Num $color={RED}>{t[1]}</Num>
        <Num $color={t[2] === "1792" ? "#c000c0" : YEL}>{t[2]}</Num>
        <Side $color={t[3] === "B" ? RED : GREEN}>{t[3]}</Side>
        <Num $color="#808080">{t[4]}</Num>
      </TickRow>
    ))}
  </QuotePanel>
);

const TOOL_LEFT = [
  ["分时", 5], ["1分钟", 15], ["5分钟", 13], ["15分钟", 13], ["30分钟", 13], ["60分钟", 13],
  ["日线", 13, CYAN], ["周线", 15], ["月线", 15], ["多周期", 13], ["更多 〉", 12],
];
const TOOL_RIGHT = [
  ["复权", 51], ["叠加", 52], ["统计", 52], ["画线", 53], ["F10", 53], ["标记", 52], ["-自选", 52], ["返回", 56],
];
const TABS_A = [
  ["指标", 44], ["窗口", 48], ["MACD", 63], ["VOL-TDX", 87], ["CCI", 44], ["趋势动力", 84], ["主力监控", 84],
  ["私募主图", 84], ["MA2", 47], ["测试主图", 84], ["测试幅图A", 94], ["测试幅图B", 97], ["更多", 48], ["设置", 47, CYAN],
];
const TABS_B = [
  ["扩展∧", 61], ["关联报价", 84], ["资金分布", 85], ["综合资讯", 83, YEL], ["行业资讯", 84, YEL],
  ["互动问答", 84, YEL], ["普及版功能说明", 137],
];
const CONCEPTS = "物联网 小米概念 华为鸿蒙 华为海思 华为汽车 华为算力 云计算 边缘计算 网络游戏 信息安全 国产软件 芯片 智能电网 智能交通 智能家居 智慧政务 智能机器 虚拟现实 无人驾驶 区块链 数字货币 人工智能 操作系统";

const INDEXES = [
  ["上证", "2856.82", "-26.54", "-0.92%", "956.6亿"],
  ["沪深", "3273.27", "-30.69", "-0.93%", "515.7亿"],
  ["创业", "1618.91", "-4.90", "-0.30%", "384.7亿"],
];

const LogoMark = () => (
  <WmLogo width="84" height="80" viewBox="0 0 84 80">
    <path d="M4 40 A38 38 0 0 1 80 40" fill="none" stroke="#d9624a" strokeWidth="8" strokeDasharray="52 12 60 0" />
    <path d="M80 42 A38 38 0 0 1 42 78" fill="none" stroke="#e8c94a" strokeWidth="8" />
    <path d="M42 0 h6 v10 h6 v14 h-4 v10 h10 v10 h-10 v6 h10 v8 h-10 v20 h-12 v-12 l-6 12 h-6 l6 -22 h-8 v-8 h12 v-6 h-14 v-10 h12 v-10 h-6 v-14 h6 z" fill="#e8c94a" />
    <path id="wm-arc" d="M4 44 A38 38 0 0 0 38 78" fill="none" />
    <text fontSize="8" fill="#e8ecf4"><textPath href="#wm-arc">www.9m8.cn</textPath></text>
  </WmLogo>
);

export default function App() {
  return (
    <Page>
      <GlobalStyle />
      <TitleBar>
        <AppLogo />
        <AppName>通达信金融终端</AppName>
        <MenuGroup $gap={36}>
          {["行情", "市场", "资讯", "数据", "专题", "发现", "交易", "行业", "热点", "L1L2"].map(m => <span key={m}>{m}</span>)}
        </MenuGroup>
        <MenuGroup $gap={23} $left="267px" $color="#f02020" $size={19}>
          <span>交易未登录</span>
          <span>润和软件</span>
        </MenuGroup>
        <MenuGroup $gap={21} $left="auto">
          {["功能", "版面", "公式", "选项", "帮助"].map(m => <span key={m}>{m}</span>)}
        </MenuGroup>
        <Clock>
          <span>09:55:38</span>
          <span>周二</span>
        </Clock>
        <WindowBtn style={{ marginLeft: 7 }}><ChevronLeft size={24} strokeWidth={3} /></WindowBtn>
        <WindowBtn><Minus size={20} strokeWidth={3} /></WindowBtn>
        <WindowBtn><Copy size={20} strokeWidth={3} /></WindowBtn>
        <WindowBtn><X size={22} strokeWidth={3} /></WindowBtn>
      </TitleBar>

      <Body>
        <LeftColumn>
          <ChartToolbar>
            <ToolBox><ToolIcon /></ToolBox>
            {TOOL_LEFT.map(([t, left, color]) => <ToolItem key={t} $left={left} $color={color}>{t}</ToolItem>)}
            <ToolGroup>
              {TOOL_RIGHT.map(([t, w]) => <ToolCell key={t} $w={w}>{t}</ToolCell>)}
            </ToolGroup>
          </ChartToolbar>

          <Pane $h={697}>
            <PriceChart />
            <PaneHead>
              <IndicatorRow>
                <span>润和软件(日线)</span>
                <ChevronDot>⌄</ChevronDot>
                <span>趋势加仓主图</span>
                <Swatch $color="#ff00ff" $left={99}>TT: 22.76</Swatch>
                <Swatch $color="#ff2020" $left={16}>VAR1: 22.72</Swatch>
                <Swatch $color="#ffff00" $left={9}>BB: 24.44</Swatch>
                <Swatch $color="#00ff00" $left={4}>: 22.72</Swatch>
              </IndicatorRow>
              <InfoRow>
                <InfoLabel>所属风格:</InfoLabel>
                <Swatch $color="#f0f0f0">融资融券 业绩预升 高融资盘 高市盈率 深港通SZ 非周期股</Swatch>
              </InfoRow>
              <InfoRow>
                <InfoLabel>所属概念:</InfoLabel>
                <Swatch $color="#ffff00">{CONCEPTS}</Swatch>
              </InfoRow>
              <InfoRow>
                <InfoLabel>所属板块:</InfoLabel>
                <Swatch $color="#ff00ff">江苏板块</Swatch>
                <Swatch $color="#ff0000" $left={14}>软件服务</Swatch>
              </InfoRow>
            </PaneHead>
            <CornerIcons>
              <svg width="16" height="16" viewBox="0 0 16 16"><path d="M8 1 L15 8 L8 15 L1 8 Z" fill="none" stroke="#808080" strokeWidth="1.2" /></svg>
              <ToolIcon />
            </CornerIcons>
          </Pane>

          <Pane $h={514} $open>
            <VolumeChart />
            <PaneHead>
              <IndicatorRow $h={24} $pad={0}>
                <ChevronDot $left={2}>⌄</ChevronDot>
                <span>VOLUME: 80072.99</span>
                <Swatch $color={GREY} $left={9}>MA5: 310885.63</Swatch>
                <Swatch $color="#ffff00" $left={8}>MA10: 394637.34</Swatch>
              </IndicatorRow>
            </PaneHead>
          </Pane>

          <AxisRow>
            <AxisCell $w={83}>2023年</AxisCell>
            <AxisCell $w={553} $pad={1}>8</AxisCell>
            <AxisCell $w={217} $pad={1}>10</AxisCell>
            <AxisCell $w={283} $pad={1}>11</AxisCell>
            <AxisCell $w={270} $pad={1}>12</AxisCell>
            <AxisCell $w={305} $pad={1}>1</AxisCell>
            <AxisCell $w={76} $pad={0} $color={GREY} $align="center">日线</AxisCell>
            <CursorDate>2023/08/31/四</CursorDate>
          </AxisRow>

          <TabRow $h={23}>
            {TABS_A.map(([t, w, c]) => <Tab key={t} $w={w} $color={c}>{t}</Tab>)}
            <TabSpacer />
            <Tab $w={46}>模板</Tab>
            <Tab $w={37}>←</Tab>
            <Tab $w={39}>→</Tab>
          </TabRow>
          <TabRow $h={25}>
            {TABS_B.map(([t, w, c]) => <Tab key={t} $w={w} $color={c}>{t}</Tab>)}
          </TabRow>
        </LeftColumn>

        <QuoteColumn />

        <SideBar>
          {SIDE_ITEMS.map((k, i) => k === "-" ? <SideSep key={i} /> : <SideBtn key={k}>{SIDE_ICONS[k]}</SideBtn>)}
          {SIDE_PERIODS.map(p => <SideBtn key={p} $on={p === "日"}>{p}</SideBtn>)}
        </SideBar>
      </Body>

      <StatusBar>
        <Coin />
        {INDEXES.map(r => (
          <IndexBlock key={r[0]}>
            <IndexName>{r[0]}</IndexName>
            <span>{r[1]}</span>
            <span>{r[2]}</span>
            <span>{r[3]}</span>
            <IndexAmt>{r[4]}</IndexAmt>
          </IndexBlock>
        ))}
        <MiniSep>
          <svg width="98" height="34" viewBox="0 0 98 34">
            <rect x="8" y="6" width="62" height="11" fill="#fff" />
            <rect x="25" y="6" width="16" height="9" fill="#ff0000" />
            <rect x="41" y="6" width="18" height="9" fill="#008000" />
            <text x="5" y="32" fontSize="18" fontWeight="700" fill="#0b860b" letterSpacing="1">↑=↑==↑ ↑</text>
          </svg>
        </MiniSep>
      </StatusBar>

      <ImeBar>
        <ImeKey $w={19} $color="#a00000">A</ImeKey>
        <ImeKey $w={71}>极品五笔</ImeKey>
        <ImeKey $w={20}>
          <svg width="12" height="16" viewBox="0 0 12 16"><path d="M7 1 C12 5 11 13 4 15 C2 15 1 14 1 13 C5 12 7 7 7 1 Z" fill="#111" /></svg>
        </ImeKey>
        <ImeKey $w={20}>·,</ImeKey>
        <ImeKey $w={18}>
          <svg width="16" height="12" viewBox="0 0 16 12"><rect width="16" height="12" fill="#eee" stroke="#666" /><path d="M2 3h12M2 6h12M2 9h12" stroke="#666" strokeDasharray="2 1" /></svg>
        </ImeKey>
      </ImeBar>

      <Watermark>
        <WmTitle>公式指标网</WmTitle>
        <LogoMark />
        <WmUrl>www.9m8.cn</WmUrl>
      </Watermark>
    </Page>
  );
}
